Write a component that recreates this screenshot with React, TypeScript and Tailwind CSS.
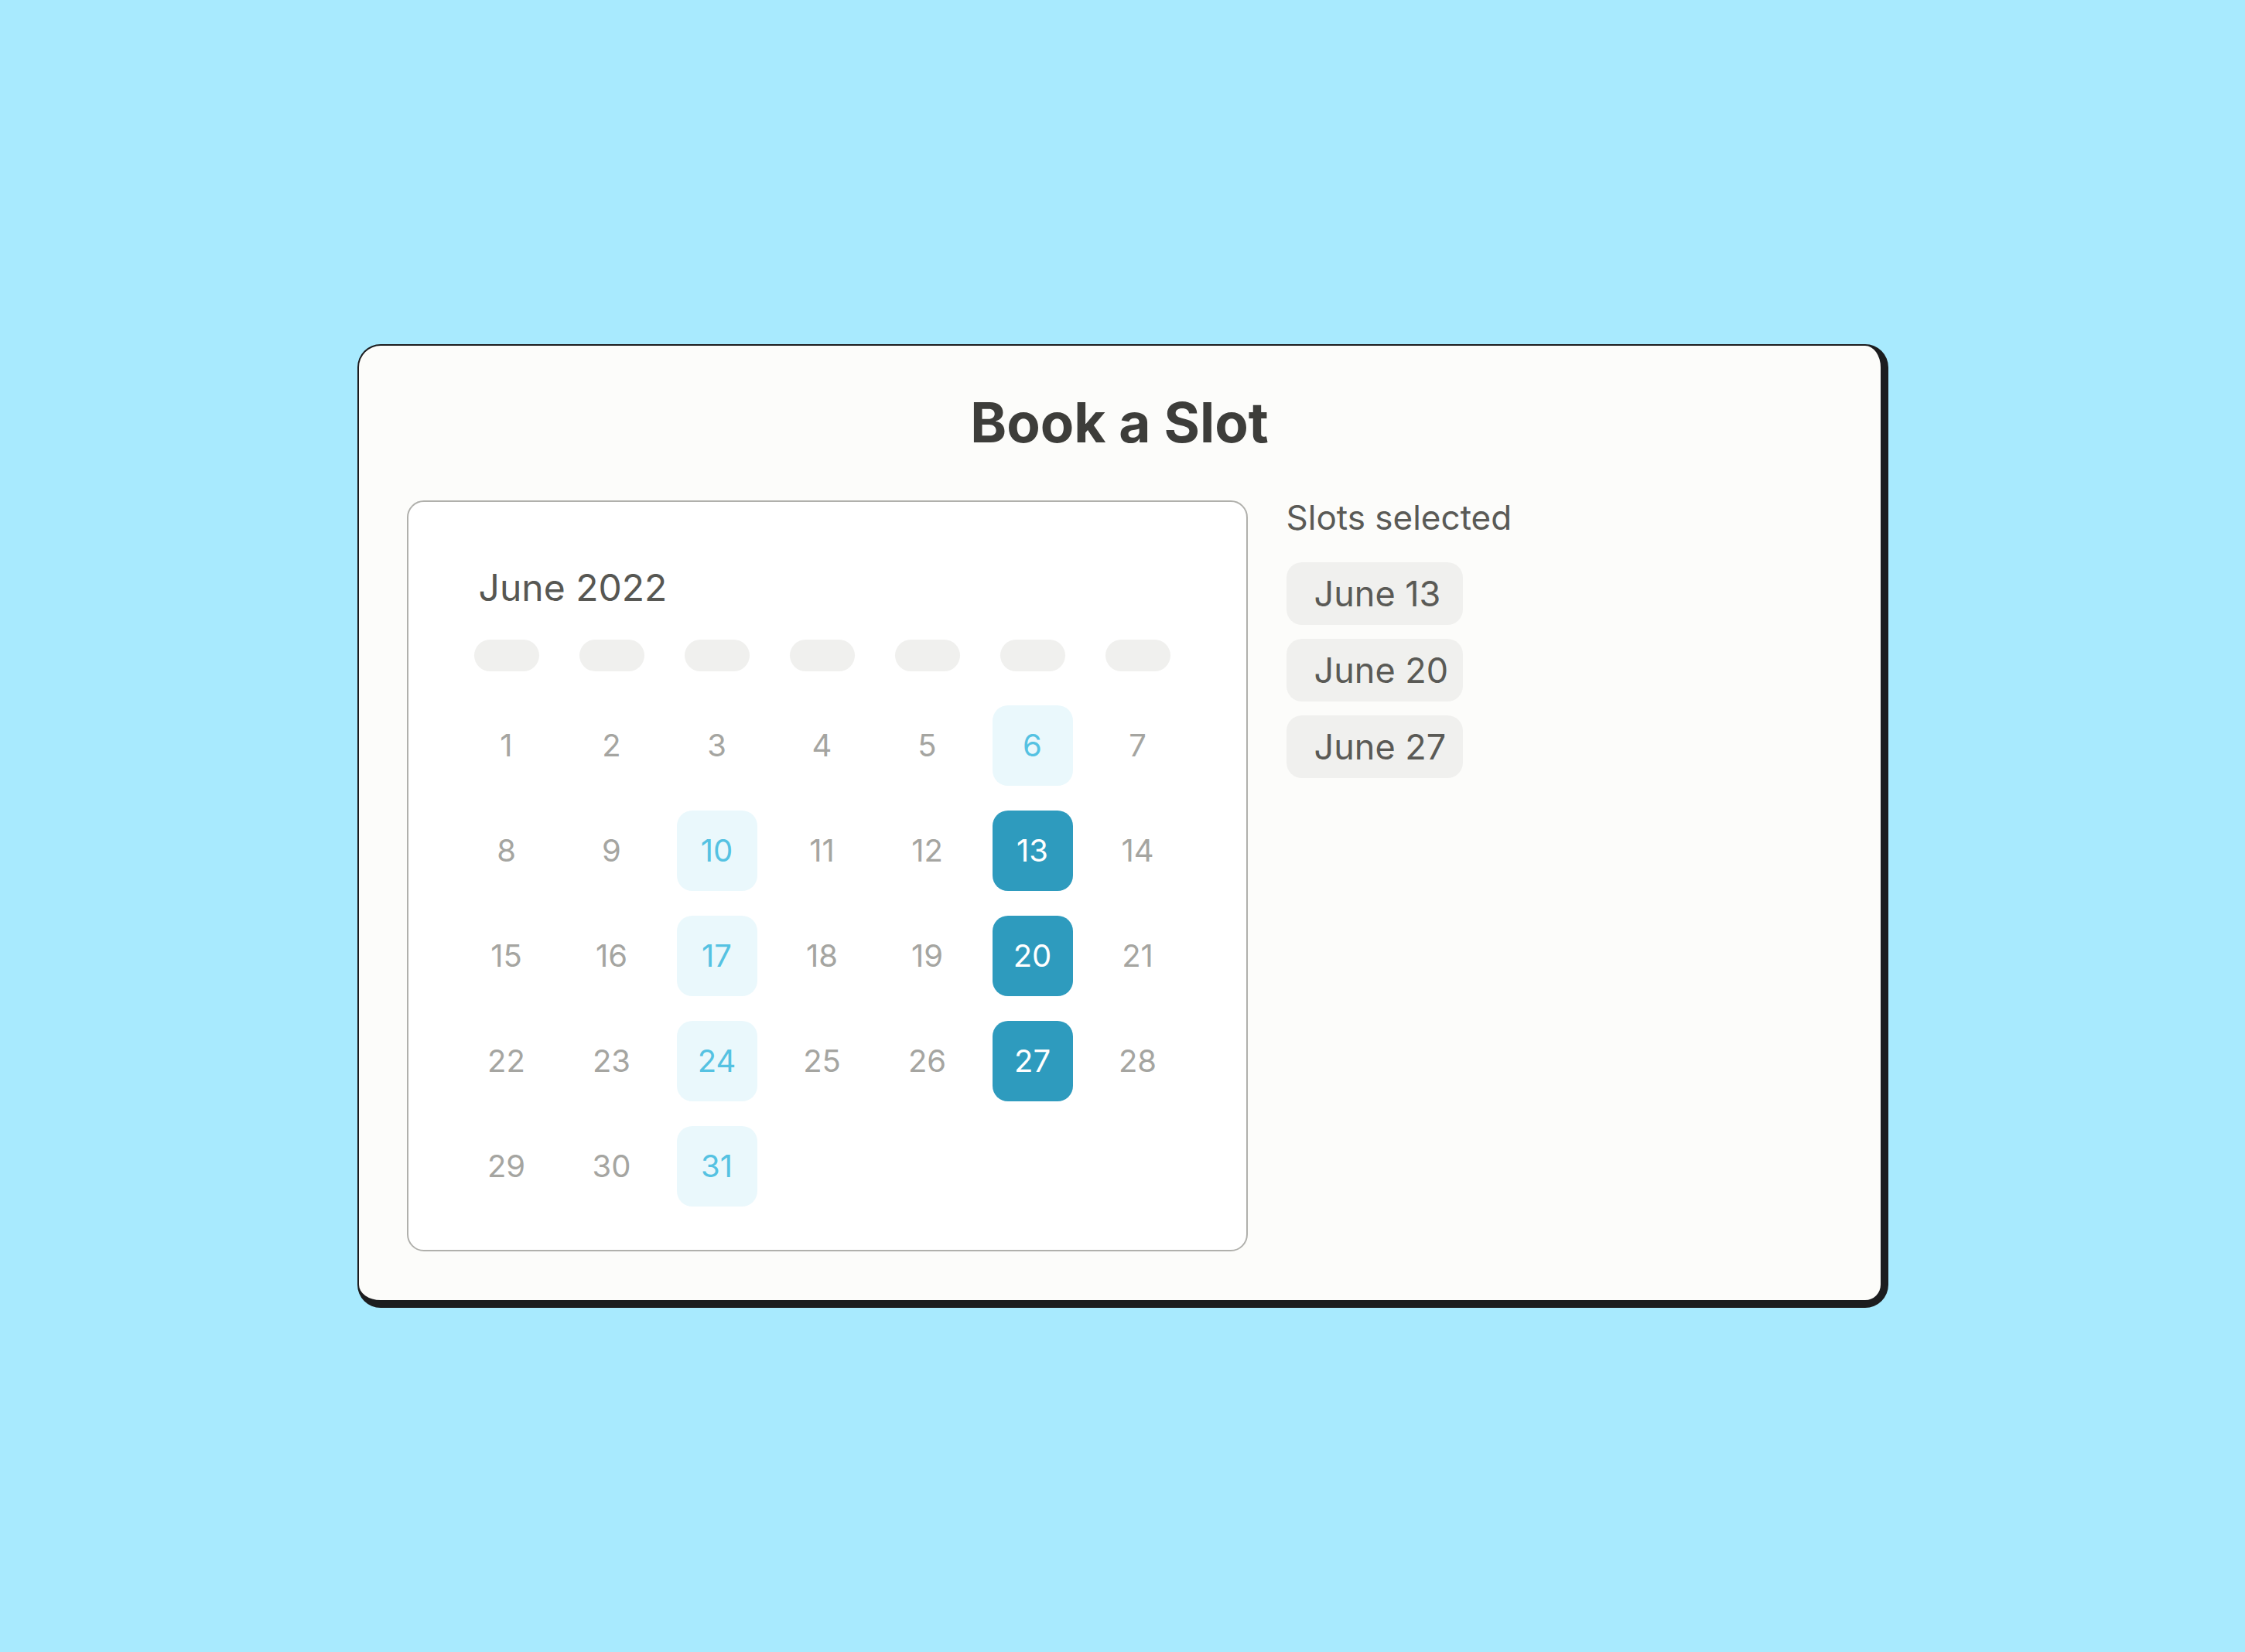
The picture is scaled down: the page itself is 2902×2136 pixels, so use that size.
import React from 'react';

type DayState = 'idle' | 'open' | 'picked';

const OPEN_DAYS = [6, 10, 17, 24, 31];
const PICKED_DAYS = [13, 20, 27];

const dayState = (day: number): DayState => {
  if (PICKED_DAYS.includes(day)) return 'picked';
  if (OPEN_DAYS.includes(day)) return 'open';
  return 'idle';
};

const dayClasses: Record<DayState, string> = {
  idle: 'text-[#a5a5a1]',
  open: 'bg-[#eaf8fc] text-[#55c2e2]',
  picked: 'bg-[#2e9bbe] text-white',
};

const Calendar: React.FC = () => {
  const days = Array.from({ length: 31 }, (_, i) => i + 1);

  return (
    <div className="w-[1087px] h-[971px] shrink-0 rounded-[22px] border-2 border-[#b0b0ac] bg-white pl-[75px] pt-[87px]">
      {/* Month header */}
      <h2 className="pl-[16px] text-[48px] leading-none text-[#575753]">June 2022</h2>

      {/* Weekday placeholders */}
      <div className="mt-[43px] grid grid-cols-[repeat(7,104px)] gap-x-[32px]">
        {Array.from({ length: 7 }, (_, i) => (
          <div key={i} className="mx-auto h-[41px] w-[84px] rounded-full bg-[#f0f0ee]" />
        ))}
      </div>

      {/* Days */}
      <div className="mt-[44px] grid grid-cols-[repeat(7,104px)] auto-rows-[104px] gap-x-[32px] gap-y-[32px]">
        {days.map((day) => (
          <div
            key={day}
            className={`flex items-center justify-center rounded-[20px] text-[40px] leading-none ${dayClasses[dayState(day)]}`}
          >
            {day}
          </div>
        ))}
      </div>
    </div>
  );
};

const SelectedSlots: React.FC = () => (
  <div>
    <h3 className="text-[44px] leading-none text-[#5a5a56]">Slots selected</h3>
    <div className="mt-[36px] flex flex-col gap-[18px]">
      {PICKED_DAYS.map((day) => (
        <div
          key={day}
          className="flex h-[81px] w-[228px] items-center rounded-[20px] bg-[#f0f0ee] pl-[36px] text-[45px] leading-none text-[#5a5a56]"
        >
          June {day}
        </div>
      ))}
    </div>
  </div>
);

export default function App() {
  return (
    <div
      className="flex h-screen w-full items-center justify-center bg-[#a8eafe]"
      style={{ fontFamily: 'Inter, "Noto Sans", sans-serif' }}
    >
      <div className="h-[1246px] w-[1979px] rounded-[30px] border-t-2 border-l-2 border-r-[10px] border-b-[10px] border-[#1c1d1f] bg-[#fcfcfa] px-[62px]">
        <h1 className="mt-[64px] text-center text-[71px] font-bold leading-none text-[#3d3d3a]">Book a Slot</h1>
        <div className="mt-[65px] flex gap-[50px]">
          <Calendar />
          <SelectedSlots />
        </div>
      </div>
    </div>
  );
}
